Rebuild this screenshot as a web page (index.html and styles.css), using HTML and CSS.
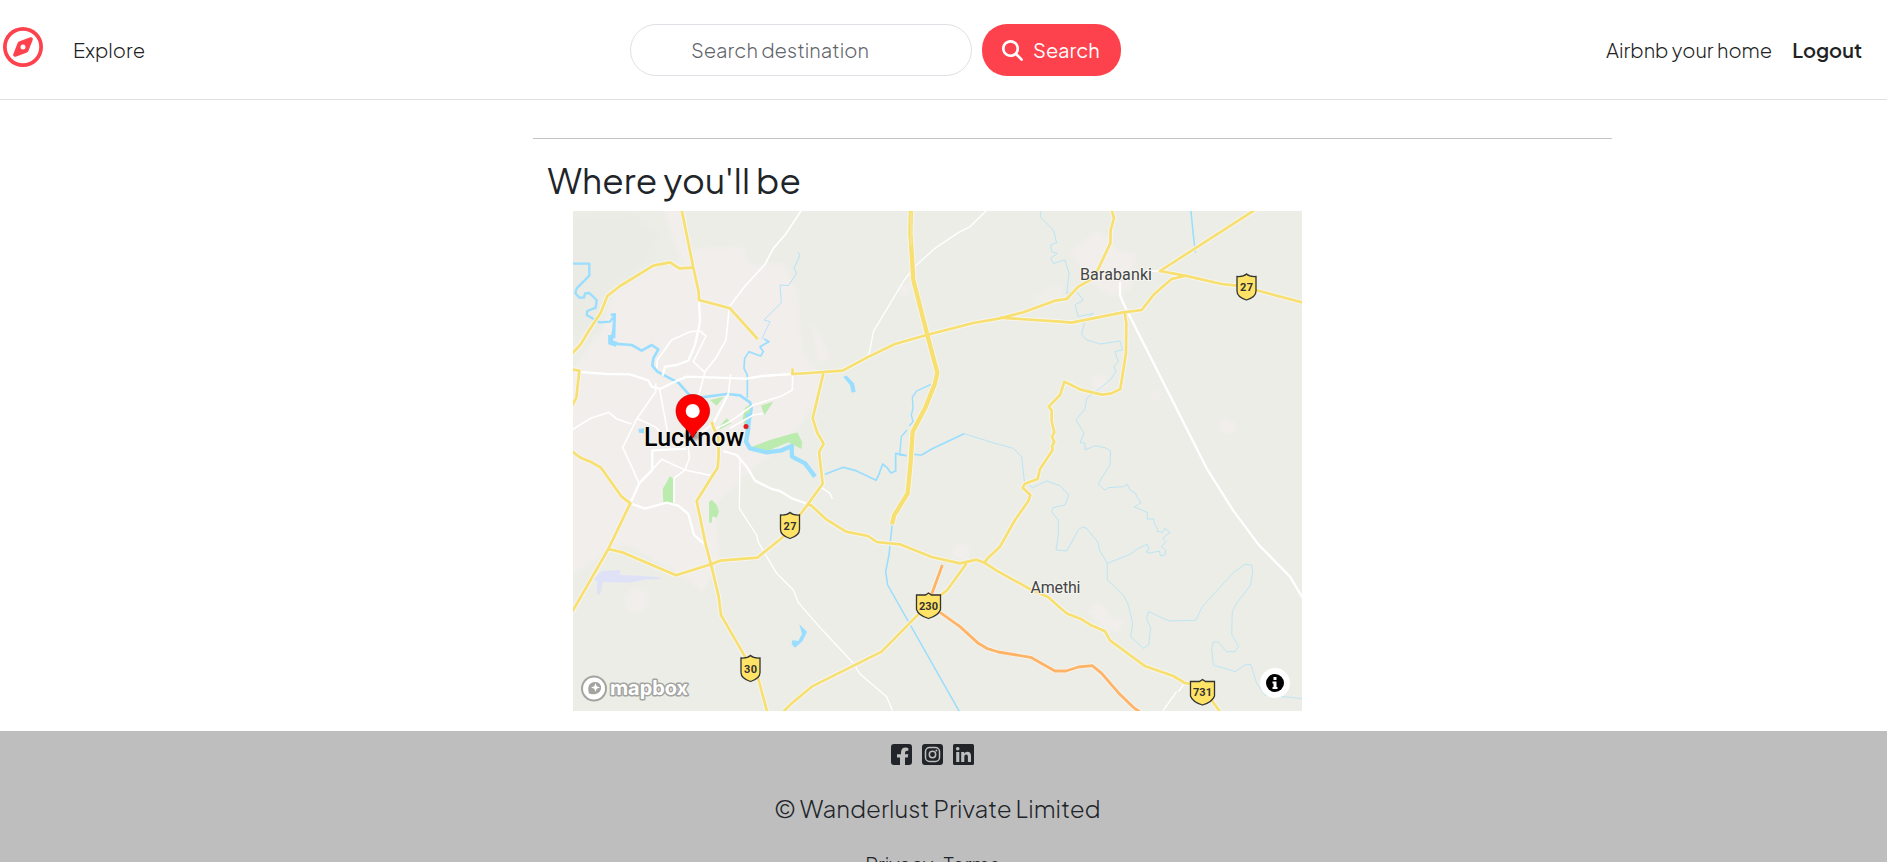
FILE: index.html
```html
<!DOCTYPE html>
<html lang="en">
<head>
<meta charset="utf-8">
<title>Wanderlust</title>
<link rel="stylesheet" href="styles.css">
</head>
<body>
<header class="navbar">
  <a class="brand" aria-label="Home"><svg viewBox="0 0 512 512"><path fill-rule="evenodd" d="M256 0a256 256 0 1 0 0 512a256 256 0 1 0 0-512zM256 48a208 208 0 1 1 0 416a208 208 0 1 1 0-416zM306.700 325.100L162.400 380.600c-19.400 7.500-38.500-11.600-31-31l55.500-144.300c3.300-8.500 9.900-15.100 18.400-18.400L349.600 131.400c19.400-7.500 38.500 11.600 31 31L325.100 306.700c-3.300 8.500-9.900 15.100-18.400 18.400zM256 224a32 32 0 1 0 0 64a32 32 0 1 0 0-64z"/></svg></a>
  <a class="explore">Explore</a>
  <form class="search">
    <div class="field"><span>Search destination</span></div>
    <button type="button" class="search-btn"><svg viewBox="0 0 512 512"><path d="M416 208c0 45.900-14.900 88.300-40 122.700L502.600 457.400c12.500 12.500 12.500 32.800 0 45.300s-32.800 12.500-45.300 0L330.700 376c-34.400 25.200-76.800 40-122.700 40C93.100 416 0 322.900 0 208S93.100 0 208 0S416 93.100 416 208zM208 352a144 144 0 1 0 0-288 144 144 0 1 0 0 288z"/></svg><span>Search</span></button>
  </form>
  <nav class="links"><a class="host">Airbnb your home</a><a class="logout">Logout</a></nav>
</header>
<main class="content">
  <hr>
  <h3>Where you'll be</h3>
  <div class="map">
  <svg viewBox="573 211 729 500" width="729" height="500">
    <defs>
      <filter id="soft" x="-20%" y="-20%" width="140%" height="140%"><feGaussianBlur stdDeviation="6"/></filter>
      <radialGradient id="shade"><stop offset="0" stop-opacity=".5"/><stop offset="1" stop-opacity="0"/></radialGradient>
      <g id="yellow">
        <g transform="translate(570 205) scale(.33333)">
          <path d="M334 10L370 188L386 260L387 285L480 310L563 402"/>
          <path d="M370 188L328 190L300 172L250 182L150 243L112 273L93 322L58 375L32 418L0 453"/>
          <path d="M0 492L28 497L19 578L0 615"/>
          <path d="M668 490L667 507L720 504L818 497L892 457L975 417L1070 390L1210 354L1290 340L1360 322L1455 287L1490 282L1525 245L1570 220L1588 185L1621 115L1622 75L1632 40L1624 10"/>
          <path d="M425 650L432 672L445 695L446 750L443 788L425 816L380 888L408 1022L423 1078L446 1175L453 1230L525 1355L565 1422L594 1530"/>
          <path d="M0 732L20 750L35 760L65 772L93 788L155 875L181 895L115 1032L0 1232"/>
          <path d="M115 1032L160 1043L318 1111L423 1078L450 1067L562 1058L640 995L712 900L758 836L748 750L748 740L761 716L742 684L728 640L760 505"/>
          <path d="M712 900L722 900L770 944L828 980L894 993L920 1011L990 1018L1085 1056L1170 1075L1220 1064L1243 1073L1280 1097L1380 1152L1435 1177L1470 1208L1492 1226L1535 1243L1560 1259L1605 1279L1620 1306L1726 1384L1810 1413L1845 1434L1880 1440L1910 1465L1957 1530"/>
          <path d="M630 1530L662 1498L725 1445L935 1340L1045 1228L1115 1168L1132 1155L1190 1075"/>
          <path d="M1290 338L1470 350L1505 353L1660 322L1715 315L1752 268L1805 222L1845 213"/>
          <path d="M2062 10L1770 198L1845 212L1955 237L2000 242L2060 256L2204 294"/>
          <path d="M1664 322L1669 355L1668 445L1651 552L1623 566L1595 569L1532 554L1483 530L1470 570L1436 605L1445 616L1445 648L1453 682L1446 696L1453 711L1446 724L1448 735L1410 792L1403 822L1365 836L1358 848L1381 870L1375 888L1335 945L1290 1025L1253 1060L1243 1073"/>
        </g>
      </g>
      <g id="trunk"><path transform="translate(570 205) scale(.33333)" d="M1023 10L1021 80L1030 225L1072 390L1102 503L1095 535L1065 610L1028 680L1022 770L1013 865L972 932L966 958"/></g>
      <g id="orange"><path transform="translate(810 455) scale(.33333)" d="M397 330L365 418M390 472L450 515L505 565L530 580L565 591L662 607L735 648L768 648L805 636L847 632L875 655L925 713L970 757L999 778"/></g>
      <path id="shield-s" d="M-9.500 -10.500Q-3 -10 0 -13Q3 -10 9.500 -10.500V4Q9.500 10 0 13Q-9.500 10 -9.500 4Z"/>
      <path id="shield-l" d="M-12 -10.500H-3L0 -12.500L3 -10.500H12V4Q10 10 0 13Q-10 10 -12 4Z"/>
    </defs>
    <rect x="573" y="211" width="729" height="500" fill="#ebede6"/>
    <g transform="translate(570 205) scale(.33333)">
      <g class="urban" filter="url(#soft)">
        <path d="M275 10H345L355 130L520 120L545 180L640 170L685 260L700 440L760 520L735 600L650 720L540 800L440 900L450 1060L400 1165L330 1110L240 1060L170 1020L120 1035L0 1120V500L90 380L130 260L250 190L330 170Z"/>
        <path d="M160 1170L190 1145L235 1155L240 1205L200 1230L165 1210ZM720 340L760 400L785 460L740 480ZM985 240L1030 230L1020 270L990 280ZM1495 140L1580 75L1625 100L1645 135L1700 145L1690 250L1620 280L1560 230ZM1555 520L1600 505L1625 545L1580 565ZM1735 575L1755 552L1775 560L1770 590ZM1945 650L1965 635L2005 655L1995 690L1950 685ZM1145 1025L1195 1010L1200 1070L1145 1060ZM1550 1220L1580 1190L1610 1205L1620 1235L1665 1240L1650 1285L1600 1275Z"/>
        <path opacity=".6" d="M1370 290L1425 245L1480 235L1480 290L1430 310Z"/>
      </g>
      <g fill="#e9ebe4" opacity=".6" filter="url(#soft)"><path d="M0 30L190 20L270 90L240 180L110 260L90 380L0 400Z"/></g>
      <g class="park">
        <path d="M420 585L462 575L440 602ZM447 665L470 640L484 655L450 673ZM525 608L545 595L538 690L526 675L518 640ZM573 602L610 590L590 620L583 630ZM547 725L600 705L670 685L682 683L697 712L694 732L655 712L600 735L560 735ZM278 852L300 814L312 822L310 894L280 894ZM417 892L425 884L440 900L447 920L440 938L427 934L425 954L417 952Z"/>
      </g>
      <path fill="#dfe2f6" d="M72 1122L95 1098L150 1095V1110L205 1112L270 1117L272 1122L230 1123L180 1133L100 1130L90 1168H80L82 1130Z"/>
      <g class="water">
        <path stroke-width="7" d="M0 176H58V212L20 250L16 265L28 278L42 278L45 265L58 264L80 285L77 308L52 318L50 330L88 352L120 350L133 333L130 375L122 415"/>
        <path stroke-width="15" stroke-linejoin="miter" d="M122 390V412L140 418"/>
        <path stroke-width="8" d="M122 330L134 328L132 400M130 416L185 420L215 437L245 420L265 433L250 460L247 482L262 500L300 520L325 533L360 572L395 577L470 567L510 571L540 592L545 610L537 660L530 700"/>
        <path stroke-width="13" d="M533 625L535 670L528 710L540 730L590 742L635 736L665 723L666 755L705 775L735 815"/>
        <path stroke-width="5" d="M532 578V510L522 490L524 460L537 440L572 453L580 440L570 425L597 410L582 402"/>
        <path stroke-width="2.500" opacity=".8" d="M575 403L600 350L582 345L634 293L630 240L655 242L680 205L672 190L690 150L683 142"/>
        <path fill="#9df" stroke="none" d="M820 515L830 512L852 535L857 560L845 563L840 540ZM205 672L222 670V685L207 683Z"/>
        <path stroke-width="4" d="M1083 538L1040 558L1027 577L1029 610L1024 630L1029 650L1018 663M1011 675L994 695L989 750L1008 752"/>
        <path stroke-width="5" d="M765 808L820 787L855 796L918 826L926 810L938 777L950 787L963 804L977 798V745L1010 752M1030 748L1055 750L1085 732L1182 686"/>
        <path stroke-width="2.500" opacity=".7" d="M1182 686L1275 715L1330 730L1355 755L1363 828L1387 848L1430 828L1470 842L1496 870L1485 900L1450 908L1445 920L1465 945V990L1458 1035L1490 1038L1525 975L1537 966L1550 970L1584 1012L1588 1035L1612 1075L1680 1048L1705 1030L1732 1018L1737 1035L1728 1040L1737 1045L1768 1038L1772 1053L1785 1050L1787 1035L1774 1025L1788 1010L1778 1000L1800 982L1785 970L1778 982L1762 979V970L1755 960L1750 942H1732V922L1693 906L1713 893L1700 875L1697 865L1680 855L1672 838L1660 845L1615 848L1605 855L1585 838L1597 815L1620 780L1622 738L1605 728L1575 722L1545 735V715L1530 712L1542 685L1518 645L1545 612L1550 580L1590 550L1620 525L1638 500L1632 485L1645 470L1635 440L1657 435L1650 408L1592 417L1550 405L1535 388L1545 345L1570 325L1525 335L1515 300L1540 285L1520 260L1490 265L1497 205L1485 165L1450 175L1442 160L1462 145L1445 140L1442 120L1460 113L1450 75L1410 35L1415 10"/>
        <path stroke-width="2.500" opacity=".65" d="M1612 1075V1125L1660 1170L1675 1200L1688 1255L1682 1295L1720 1330L1736 1320L1742 1270L1730 1240L1735 1220L1798 1248L1877 1246L1897 1205L1990 1103L2025 1078L2045 1080L2048 1100L2042 1140L2000 1195L1987 1220L1985 1288L2006 1325L1995 1340H1970L1943 1310L1930 1312L1925 1330L1930 1380L1995 1400L2025 1380L2042 1378L2060 1435L2085 1470L2200 1481"/>
        <path stroke-width="4.500" d="M1862 10L1870 90L1876 143M966 962L957 1050L947 1100L953 1140L1174 1530"/>
        <path fill="#9df" stroke="none" d="M688 1258L711 1280L698 1308L675 1328L665 1318L667 1306L685 1308L696 1287Z"/>
      </g>
      <g class="streets">
        <path stroke-width="7" d="M15 500L112 507L180 508L235 526L245 545L270 552L300 537L350 515L530 521L577 513L668 507M387 285L390 350L375 420L355 467L320 480L285 485L278 512M475 567L430 655M247 736L350 731M247 736V795L208 835L181 895L225 911L290 893L325 902L355 927L372 990L408 1022"/>
        <path stroke-width="5" d="M693 18L645 90L610 130L585 178L525 243L478 305L468 405L438 458L405 500L385 575M390 378L360 380L305 405L262 465L260 490M390 378L408 393L370 470L405 503M482 507L475 567M668 507L667 555L635 573L550 600L480 650L430 675M0 678L62 640L117 622L140 642L185 657M257 535V560L200 642L158 728L185 785L207 835M268 548L295 695M200 640L255 665L270 680M370 700L430 655M355 725L358 760L345 795L312 820V893M207 835L275 763L345 795L425 812M580 625L550 630L480 670"/>
        <path stroke-width="7" d="M460 738L500 750L530 785L555 827L605 852L630 858L665 880L722 900"/>
        <path stroke-width="4" d="M510 760L508 910L560 990L565 1012L620 1105L670 1155L685 1193L755 1273L850 1375L870 1407L950 1475L973 1530M1248 18L1200 65L1165 83L1095 130L1037 182L1003 225L910 380L900 435L892 457M755 848L780 865L787 882M1845 1434L1825 1460M1820 1460L1770 1530M1770 198H1735L1690 205"/>
        <path stroke-width="7" d="M1650 230L1650 270L1660 295L1675 325L1910 790L1990 917L2065 1018L2160 1115L2205 1190"/>
      </g>
    </g>
    <use href="#orange" class="casing"/><use href="#yellow" class="casing"/><use href="#trunk" class="casing wide"/>
    <use href="#orange" class="orange"/><use href="#yellow" class="yellow"/><use href="#trunk" class="yellow wide"/>
    <path d="M911 213L911 245" stroke="#f5eab0" fill="none"/>
    <g class="shields">
      <g transform="translate(1246.500 287)"><use href="#shield-s"/><text y="4" textLength="13">27</text></g>
      <g transform="translate(790 525.500)"><use href="#shield-s"/><text y="4" textLength="13">27</text></g>
      <g transform="translate(750.500 668.500)"><use href="#shield-s"/><text y="4" textLength="13">30</text></g>
      <g transform="translate(928.500 605.500)"><use href="#shield-l"/><text y="4" textLength="19">230</text></g>
      <g transform="translate(1202.500 692)"><use href="#shield-l"/><text y="4" textLength="19">731</text></g>
    </g>
    <g class="places">
      <text x="1080" y="280" textLength="72">Barabanki</text>
      <text x="1030.500" y="592.500" textLength="50">Amethi</text>
      <circle cx="746" cy="426.500" r="2.500" fill="#e02020"/>
      <text class="city" x="644" y="446" textLength="100" lengthAdjust="spacingAndGlyphs">Lucknow</text>
    </g>
    <ellipse cx="693" cy="436" rx="11" ry="6" fill="url(#shade)"/>
    <path d="M692.700 438C689 428.500 676 423.500 676 411A16.800 16.500 0 0 1 709.600 411C709.600 423.500 696.500 428.500 692.700 438Z" fill="#f00" stroke="#c00" stroke-width=".7"/>
    <circle cx="692.700" cy="411" r="7" fill="#fff"/>
    <g class="mapbox">
      <circle cx="594" cy="688.500" r="12" fill="#fff" stroke="#a3a49f" stroke-width="2"/>
      <path d="M589 693.500C587 687 589 682 595 682C602 682 603 690 598 693C595 695 591 694 589 693.500Z" fill="#a3a49f"/>
      <path d="M595.500 683L596.700 686.300L600 687.500L596.700 688.700L595.500 692L594.300 688.700L591 687.500L594.300 686.300Z" fill="#fff"/>
      <text x="610" y="694.500" textLength="78" lengthAdjust="spacingAndGlyphs">mapbox</text>
    </g>
    <circle cx="1275" cy="683" r="15" fill="#fff"/><circle cx="1275" cy="683" r="9"/>
    <path d="M1273.500 677H1276.500V680H1273.500ZM1272.500 681.500H1276.500V687H1277.500V689H1272.500V687H1273.500V683.500H1272.500Z" fill="#fff"/>
  </svg>
  </div>
</main>
<footer class="footer">
  <div class="social">
    <svg viewBox="0 0 21 21"><path fill-rule="evenodd" d="M3 0H18Q21 0 21 3V18Q21 21 18 21H14V13.500H16.700L17.300 10.300H14V9Q14 6.800 16 6.800H17.300V3.900Q10 2.200 10 8.700V10.300H6V13.500H9V21H3Q0 21 0 18V3Q0 0 3 0Z"/></svg>
    <svg viewBox="0 0 21 21"><rect width="21" height="21" rx="3"/><rect x="3.500" y="3.500" width="14" height="14" rx="4" fill="none" stroke="#bebebe" stroke-width="1.500"/><circle cx="10.500" cy="10.500" r="3.200" fill="none" stroke="#bebebe" stroke-width="1.500"/><circle cx="14.400" cy="6.600" r="1" fill="#bebebe"/></svg>
    <svg viewBox="0 0 21 21"><rect width="21" height="21" rx="1.500"/><path fill="#bebebe" d="M3.200 8H6.300V18H3.200ZM8.200 8H11.200V9.400Q12.200 7.700 14.300 7.700Q18 7.700 18 12V18H14.900V12.700Q14.900 10.500 13.200 10.500Q11.300 10.500 11.300 12.800V18H8.200Z"/><circle cx="4.750" cy="4.800" r="1.800" fill="#bebebe"/></svg>
  </div>
  <div class="copy">© Wanderlust Private Limited</div>
  <div class="legal"><a>Privacy</a><a>Terms</a></div>
</footer>
</body>
</html>
```
FILE: styles.css
```css
* { box-sizing: border-box; }
html, body { margin: 0; height: 862px; overflow: hidden; }
body {
  display: flex;
  flex-direction: column;
  background: #fff;
  color: #222;
  font: 300 20px/30px "Plus Jakarta Sans", Inter, sans-serif;
}
.navbar {
  display: flex;
  align-items: center;
  flex: none;
  height: 100px;
  padding-top: 1px;
  border-bottom: 1px solid #dee0e2;
}
.brand { width: 40px; height: 40px; margin: -6px 0 0 3px; }
.brand svg { display: block; width: 40px; height: 40px; fill: #fe424d; }
.explore { width: 557px; margin-left: 30px; }
.search { display: flex; gap: 10px; }
.field {
  width: 342px;
  height: 52px;
  padding: 10px 0 0 60px;
  border: 1px solid #dee2e6;
  border-radius: 26px;
  color: #5f6469;
}
.search-btn {
  display: flex;
  align-items: center;
  width: 139px;
  height: 52px;
  padding: 0 0 0 20px;
  border: 0;
  border-radius: 25px;
  background: #fe424d;
  color: #fff;
  font: 400 20px/30px "Plus Jakarta Sans", Inter, sans-serif;
}
.search-btn svg { width: 21px; height: 21px; margin-right: 10px; fill: #fff; }
.links { display: flex; flex: 1; justify-content: flex-end; padding: 0 25px 0 0; }
.host { margin-right: 20px; }
.logout { font-weight: 600; }
.content { flex: none; width: 1079px; height: 631px; margin-left: 533px; }
.content hr { height: 1px; margin: 38px 0 0; border: 0; background: #c3c4c5; }
.content h3 {
  height: 72px;
  margin: 0;
  padding: 20px 0 0 14.500px;
  color: #212529;
  font-size: 35px;
  font-weight: 450;
  letter-spacing: .1px;
  line-height: 42px;
}
.map { width: 729px; height: 500px; margin-left: 40px; }
.map svg { display: block; }
.urban { fill: #f1eeeb; }
.park { fill: #bcebb0; }
.water { fill: none; stroke: #9df; stroke-linejoin: round; }
.streets { fill: none; stroke: #fff; stroke-linejoin: round; }
.casing, .yellow, .orange { fill: none; stroke-linejoin: round; }
.casing { stroke: #f6f5f0; stroke-width: 14px; }
.casing.wide { stroke-width: 19px; }
.yellow { stroke: #f7df70; stroke-width: 8px; }
.yellow.wide { stroke-width: 13px; }
.orange { stroke: #ffb366; stroke-width: 8.500px; }
.shields { fill: #ffe366; stroke: #333; stroke-width: 1.300px; }
.shields text {
  fill: #333;
  stroke: none;
  font: 700 11px Roboto, sans-serif;
  text-anchor: middle;
}
.places text {
  fill: #444;
  stroke: #f5f5f1;
  stroke-width: 2px;
  paint-order: stroke;
  font: 400 16px Roboto, sans-serif;
}
.places .city { fill: #000; font-size: 25px; font-weight: 500; }
.mapbox text {
  fill: #fff;
  stroke: #a3a49f;
  stroke-width: 3px;
  stroke-linejoin: round;
  paint-order: stroke;
  font: 700 20px Inter, sans-serif;
}
.footer {
  display: flex;
  flex: none;
  flex-direction: column;
  align-items: center;
  height: 131px;
  padding-top: 12.500px;
  background: #bebebe;
  color: #212529;
}
.social { display: flex; gap: 10px; margin-right: 22px; }
.social svg { width: 21px; height: 21px; fill: #212529; }
.copy { height: 36px; margin-top: 25.500px; margin-right: 12px; font-size: 24px; line-height: 36px; }
.legal { display: flex; gap: 10px; margin: 23px 22px 0 0; }
```
